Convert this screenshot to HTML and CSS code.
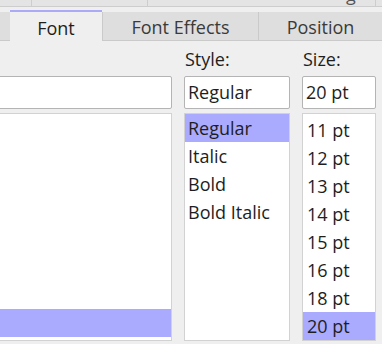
FILE: index.html
```html
<!DOCTYPE html>
<html lang="en">
<head>
    <meta charset="UTF-8">
    <meta name="viewport" content="width=device-width, initial-scale=1.0">
    <title>Font</title>
    <link rel="stylesheet" href="styles.css">
</head>
<body>
    <div class="strip">
        <div class="strip-cell c1"></div>
        <div class="strip-cell c2"></div>
        <div class="strip-cell c3"><span class="glyph">g</span></div>
        <div class="strip-cell c4"></div>
    </div>

    <div class="tabs">
        <div class="tab stub"></div>
        <div class="tab active">Font</div>
        <div class="tab effects">Font Effects</div>
        <div class="tab position">Position</div>
    </div>

    <div class="panel">
        <div class="col family">
            <div class="label">&nbsp;</div>
            <div class="field"></div>
            <div class="list family-list">
                <div class="item selected"></div>
            </div>
        </div>
        <div class="col style">
            <div class="label">Style:</div>
            <div class="field">Regular</div>
            <div class="list">
                <div class="item selected">Regular</div>
                <div class="item">Italic</div>
                <div class="item">Bold</div>
                <div class="item">Bold Italic</div>
            </div>
        </div>
        <div class="col size">
            <div class="label">Size:</div>
            <div class="field">20 pt</div>
            <div class="list size-list">
                <div class="item">11 pt</div>
                <div class="item">12 pt</div>
                <div class="item">13 pt</div>
                <div class="item">14 pt</div>
                <div class="item">15 pt</div>
                <div class="item">16 pt</div>
                <div class="item">18 pt</div>
                <div class="item selected">20 pt</div>
            </div>
        </div>
    </div>
</body>
</html>
```

FILE: styles.css
```css
body {
    margin: 0;
    width: 382px;
    height: 344px;
    overflow: hidden;
    background-color: #efefef;
    font-family: "Open Sans", "Noto Sans", sans-serif;
    font-size: 18px;
    color: #1e1e1e;
}

/* полоса сверху - часть другого заголовка */
.strip {
    display: flex;
    height: 6px;
    background-color: #e4e4e4;
    border-bottom: 1px solid #cdcdcd;
}

.strip-cell {
    border-right: 1px solid #cdcdcd;
    overflow: hidden;
    position: relative;
}

.strip-cell.c1 { width: 31px; }
.strip-cell.c2 { width: 115px; }
.strip-cell.c3 { width: 227px; }
.strip-cell.c4 { flex: 1; border-right: none; }

.glyph {
    position: absolute;
    left: 198px;
    top: -18px;
    font-size: 18px;
    line-height: 24px;
    color: #555;
}

.tabs {
    display: flex;
    margin-top: 3px;
    height: 31px;
    align-items: stretch;
}

.tab {
    display: flex;
    justify-content: center;
    align-items: center;
    margin-top: 2px;
    background-color: #dedede;
    border-right: 1px solid #cacaca;
    border-bottom: 1px solid #cacaca;
    color: #3a3a3a;
    box-sizing: border-box;
    padding-top: 1px;
}

.tab.stub { width: 10px; border-right: none; }

.tab.active {
    width: 92px;
    margin-top: 0;
    background-color: #efefef;
    border-top: 2px solid #aaaaf6;
    border-bottom: none;
    border-right: none;
    color: #1e1e1e;
    padding-top: 2px;
}

.tab.effects { width: 157px; border-left: 1px solid #cacaca; }
.tab.position { flex: 1; border-right: none; }

.panel {
    display: grid;
    grid-template-columns: 174px 106px 74px;
    column-gap: 12px;
    margin-left: -2px;
}

.col {
    display: flex;
    flex-direction: column;
}

.label {
    height: 35px;
    padding-left: 1px;
    padding-top: 3px;
    line-height: 30px;
    box-sizing: border-box;
}

.field {
    height: 33px;
    background-color: #fff;
    border: 1px solid #b4b4b4;
    border-radius: 2px;
    box-sizing: border-box;
    padding-left: 3px;
    line-height: 31px;
}

.list {
    margin-top: 4px;
    height: 228px;
    background-color: #fff;
    border: 1px solid #d2d2d2;
    box-sizing: border-box;
    display: flex;
    flex-direction: column;
    overflow: hidden;
}

.family-list {
    justify-content: flex-end;
    padding-bottom: 3px;
}

.size-list {
    padding-top: 2px;
}

.item {
    height: 28px;
    flex-shrink: 0;
    line-height: 28px;
    padding-left: 3px;
}

.size-list .item { padding-left: 4px; }

.item.selected {
    background-color: #aaaaff;
}
```
